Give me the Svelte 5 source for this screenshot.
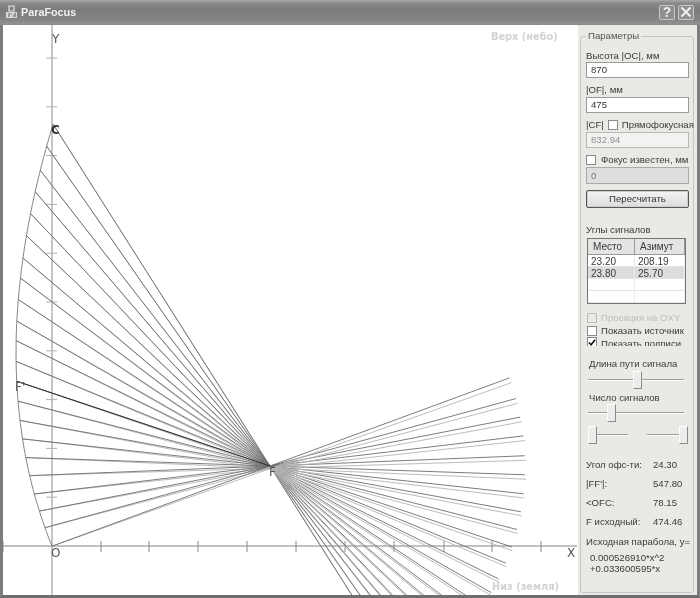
<script>
  // dish geometry, in window pixels
  const focus = { x: 270, y: 466 };
  const focus2 = { x: 271.2, y: 468.2 };
  const startDeg = 159.8;
  const sweepDeg = 77.8;
  const endRadius = 255;

  // heights on the dish where the source rays start
  const rayRows = [
    123, 147, 170, 192, 214, 236, 258, 278, 299, 321, 341,
    361, 381, 401, 420, 439, 458, 476, 494, 511, 528, 546
  ];

  const rad = (d) => (d * Math.PI) / 180;

  function dishPoint(deg) {
    const r = 464 / (1 + Math.cos(rad(deg - 156)));
    return { x: focus.x + r * Math.cos(rad(deg)), y: focus.y + r * Math.sin(rad(deg)) };
  }

  const dishSamples = Array.from({ length: 401 }, (_, i) =>
    dishPoint(startDeg + (sweepDeg * i) / 400)
  );

  function pointAtRow(y) {
    return dishSamples.reduce((best, p) => (Math.abs(p.y - y) < Math.abs(best.y - y) ? p : best));
  }

  function through(p, via) {
    const a = Math.atan2(via.y - p.y, via.x - p.x);
    return { x: via.x + endRadius * Math.cos(a), y: via.y + endRadius * Math.sin(a) };
  }

  const rays = rayRows.map((y) => {
    const p = pointAtRow(y);
    return { p, dark: through(p, focus), light: through(p, focus2) };
  });

  const fPrime = pointAtRow(381);

  const dishPath = dishSamples
    .filter((_, i) => i % 5 === 0)
    .map((p, i) => `${i ? 'L' : 'M'}${p.x.toFixed(1)} ${p.y.toFixed(1)}`)
    .join(' ');

  const yTicks = Array.from({ length: 10 }, (_, i) => 546 - 48.8 * (i + 1));
  const xTicks = [3, 101, 149, 198, 247, 296, 345, 394, 444, 492, 541];

  const angles = [
    ['23.20', '208.19'],
    ['23.80', '25.70'],
    ['', ''],
    ['', '']
  ];

  const stats = [
    ['Угол офс-ти:', '24.30', 'gap-a'],
    ["|FF'|:", '547.80', 'gap-a'],
    ['<OFC:', '78.15', 'gap-a'],
    ['F исходный:', '474.46', 'gap-b']
  ];
</script>

<div class="window">
  <header class="titlebar">
    <svg class="app-icon" width="13" height="14" viewBox="0 0 13 14" aria-hidden="true">
      <path d="M4 1h5v5H4z" fill="none" stroke="#e4e4e4" stroke-width="1.2" />
      <rect x="1" y="7" width="11" height="6" fill="#d8d8d8" />
      <path d="M3 9h2M6 9h1M9 9h2M3 11h2M8 11h3" stroke="#555" stroke-width="1" />
    </svg>
    <span class="title">ParaFocus</span>
    <div class="caption-btn help">?</div>
    <div class="caption-btn close">
      <svg width="12" height="12" viewBox="0 0 12 12" aria-hidden="true">
        <path d="M1.5 1.5l9 9M10.5 1.5l-9 9" stroke="#f2f2f2" stroke-width="2" />
      </svg>
    </div>
  </header>

  <div class="client">
    <div class="canvas">
      <svg width="575" height="570" viewBox="3 25 575 570">
        <line x1="52" y1="25" x2="52" y2="595" class="axis" />
        <line x1="3" y1="546" x2="577" y2="546" class="axis" />
        {#each yTicks as y}
          <line x1="46" x2="57" y1={y} y2={y} class="tick-y" />
        {/each}
        {#each xTicks as x}
          <line x1={x} x2={x} y1="541" y2="552" class="tick-x" />
        {/each}

        {#each rays as r}
          <line x1={r.p.x} y1={r.p.y} x2={r.light.x} y2={r.light.y} class="ray-light" />
          <line x1={r.p.x} y1={r.p.y} x2={r.dark.x} y2={r.dark.y} class="ray-dark" />
        {/each}
        <line x1={fPrime.x} y1={fPrime.y} x2={focus.x} y2={focus.y} class="ray-main" />
        <path d={dishPath} class="dish" />

        <text x="52" y="43" class="label">Y</text>
        <text x="51" y="134" class="label strong">C</text>
        <text x="15" y="391" class="label">F'</text>
        <text x="269" y="476" class="label">F</text>
        <text x="51" y="557" class="label">O</text>
        <text x="567" y="557" class="label">X</text>
        <text x="491" y="40" class="note">Верх (небо)</text>
        <text x="492" y="590" class="note">Низ (земля)</text>
      </svg>
    </div>

    <aside class="panel">
      <fieldset class="group">
        <legend>Параметры</legend>

        <div class="caption first">Высота |OC|, мм</div>
        <div class="field">870</div>
        <div class="caption">|OF|, мм</div>
        <div class="field">475</div>
        <div class="caption check-row">
          <span>|CF|</span><span class="box"></span><span>Прямофокусная</span>
        </div>
        <div class="field readonly">832.94</div>
        <div class="caption check-row known">
          <span class="box"></span><span>Фокус известен, мм</span>
        </div>
        <div class="field disabled">0</div>
        <div class="button">Пересчитать</div>

        <div class="section">Углы сигналов</div>
        <div class="table">
          <div class="thead">
            <span>Место</span><span>Азимут</span>
          </div>
          {#each angles as row, i}
            <div class="tr" class:selected={i === 1}>
              <span>{row[0]}</span><span>{row[1]}</span>
            </div>
          {/each}
        </div>

        <div class="opt off"><span class="box"></span><span>Проекция на OXY</span></div>
        <div class="opt"><span class="box"></span><span>Показать источник</span></div>
        <div class="opt clipped">
          <span class="box checked">
            <svg width="9" height="9" viewBox="0 0 9 9" aria-hidden="true">
              <path d="M1 4.5l2.5 2.5L8 1.5" fill="none" stroke="#111" stroke-width="1.8" />
            </svg>
          </span>
          <span>Показать подписи</span>
        </div>

        <div class="slider-label">Длина пути сигнала</div>
        <div class="slider long"><span class="thumb" style="margin-left: 45px"></span></div>
        <div class="slider-label second">Число сигналов</div>
        <div class="slider long tight"><span class="thumb" style="margin-left: 19px"></span></div>
        <div class="slider-pair">
          <div class="slider short"><span class="thumb" style="margin-left: 0"></span></div>
          <div class="slider short"><span class="thumb" style="margin-left: 32px"></span></div>
        </div>

        <div class="stats">
          {#each stats as s}
            <div class="stat {s[2]}"><span>{s[0]}</span><span>{s[1]}</span></div>
          {/each}
        </div>
        <div class="formula-title">Исходная парабола, у=</div>
        <div class="formula">0.000526910*x^2<br />+0.033600595*x</div>
      </fieldset>
    </aside>
  </div>
</div>

<style>
  :global(body) {
    margin: 0;
    background: #fff;
  }

  .window {
    width: 700px;
    height: 598px;
    display: flex;
    flex-direction: column;
    box-sizing: border-box;
    background: #e9e9e6;
    font-family: 'Liberation Sans', Arial, sans-serif;
    font-size: 9.6px;
    color: #3a3a3a;
    filter: blur(0.4px);
    overflow: hidden;
  }

  .titlebar {
    height: 25px;
    flex: none;
    display: flex;
    align-items: center;
    box-sizing: border-box;
    padding: 0 6px 0 5px;
    background: linear-gradient(#a9a9a9 0, #8b8b8b 3px, #7b7b7b 10px, #858585 20px, #949494 25px);
    border-bottom: 1px solid #8c8c8c;
  }

  .app-icon {
    margin-right: 3px;
  }

  .title {
    flex: 1;
    color: #f0f0f0;
    font-size: 10.8px;
    font-weight: bold;
  }

  .caption-btn {
    width: 16px;
    height: 15px;
    box-sizing: border-box;
    margin-left: 3px;
    display: flex;
    align-items: center;
    justify-content: center;
    border: 1px solid #c8c8c8;
    border-radius: 2px;
    background: #8f8f8f;
    color: #ececec;
    font-size: 14px;
    font-weight: bold;
  }

  .client {
    flex: 1;
    min-height: 0;
    display: flex;
    border-left: 3px solid #7c7c7c;
    border-right: 3px solid #7c7c7c;
    border-bottom: 3px solid #6e6e6e;
  }

  .canvas {
    width: 575px;
    flex: none;
    background: #fff;
    overflow: hidden;
  }

  .canvas svg {
    display: block;
  }

  .axis {
    stroke: #adadad;
    stroke-width: 1.4;
  }

  .tick-y {
    stroke: #b0b0b0;
  }

  .tick-x {
    stroke: #8a8a8a;
  }

  .ray-light {
    stroke: #b4b4b4;
    stroke-width: 0.9;
  }

  .ray-dark {
    stroke: #6e6e6e;
    stroke-width: 0.9;
  }

  .ray-main {
    stroke: #333;
    stroke-width: 1;
  }

  .dish {
    fill: none;
    stroke: #777;
    stroke-width: 0.9;
  }

  .label {
    font-family: 'DejaVu Sans', sans-serif;
    font-size: 12px;
    fill: #555;
  }

  .label.strong {
    fill: #333;
    font-weight: bold;
  }

  .note {
    font-family: 'DejaVu Sans', sans-serif;
    font-size: 9.8px;
    font-weight: bold;
    fill: #d2d2d2;
  }

  .panel {
    flex: 1;
    min-width: 0;
    padding: 5px 3px 2px 2px;
    box-sizing: border-box;
    display: flex;
  }

  .group {
    flex: 1;
    min-width: 0;
    margin: 0;
    padding: 0 4px 0 5px;
    border: 1px solid #c6c6c6;
    border-radius: 3px;
    box-sizing: border-box;
  }

  legend {
    padding: 0 2px;
    margin-left: 0;
    line-height: 12px;
    color: #555;
  }

  .caption {
    height: 13px;
    line-height: 13px;
    margin-top: 5px;
    white-space: nowrap;
  }

  .caption.first {
    height: 12px;
    margin-top: 7px;
  }

  .check-row {
    display: flex;
    align-items: center;
    gap: 4px;
  }

  .known {
    gap: 5px;
  }

  .box {
    width: 10px;
    height: 10px;
    flex: none;
    box-sizing: border-box;
    border: 1px solid #8a8a8a;
    background: #fff;
    display: inline-flex;
    align-items: center;
    justify-content: center;
  }

  .field {
    height: 16px;
    box-sizing: border-box;
    margin-top: 1px;
    width: 103px;
    padding-left: 4px;
    line-height: 14px;
    border: 1px solid #9a9a9a;
    background: #fff;
    color: #333;
  }

  .readonly {
    color: #8f8f8f;
    border-color: #b8b8b8;
    background: #f2f2f0;
  }

  .disabled {
    height: 17px;
    line-height: 15px;
    color: #777;
    background: #dedede;
    border-color: #aaa;
  }

  .button {
    height: 18px;
    width: 103px;
    margin-top: 6px;
    box-sizing: border-box;
    border: 1px solid #555;
    border-radius: 2px;
    background: linear-gradient(#f4f4f4, #dcdcdc);
    box-shadow: inset 0 0 0 1px #cfcfcf;
    text-align: center;
    line-height: 15px;
    color: #333;
  }

  .section {
    margin-top: 15px;
    height: 13px;
    line-height: 13px;
  }

  .table {
    margin-top: 2px;
    margin-left: 1px;
    width: 99px;
    height: 66px;
    box-sizing: border-box;
    border: 1px solid #777;
    background: #fff;
    overflow: hidden;
  }

  .thead {
    height: 16px;
    display: grid;
    grid-template-columns: 47px 1fr;
    background: #e4e4e2;
    border-bottom: 1px solid #999;
    box-sizing: border-box;
    line-height: 15px;
    font-size: 10px;
  }

  .thead span {
    padding-left: 5px;
    border-right: 1px solid #999;
  }

  .tr {
    height: 12px;
    display: grid;
    grid-template-columns: 47px 1fr;
    box-sizing: border-box;
    border-bottom: 1px solid #e4e4e4;
    line-height: 13px;
    font-size: 10px;
  }

  .tr span {
    padding-left: 3px;
    border-right: 1px solid #ececec;
  }

  .selected {
    background: #dcdcdc;
  }

  .opt {
    height: 13px;
    line-height: 13px;
    display: flex;
    align-items: center;
    gap: 4px;
    margin-left: 1px;
    white-space: nowrap;
  }

  .off {
    margin-top: 7px;
    color: #bdbdbd;
  }

  .off .box {
    background: #e9e9e6;
    border-color: #bdbdbd;
  }

  .clipped {
    height: 9px;
    overflow: hidden;
    align-items: flex-start;
  }

  .slider-label {
    margin-top: 11px;
    margin-left: 3px;
    height: 13px;
    line-height: 13px;
  }

  .slider-label.second {
    margin-top: 2px;
  }

  .slider {
    height: 18px;
    margin-top: 1px;
    display: flex;
    background: linear-gradient(#e9e9e6 8px, #9c9c9c 8px, #9c9c9c 9px, #fff 9px, #fff 10px, #e9e9e6 10px);
  }

  .long {
    margin-left: 2px;
    width: 96px;
  }

  .tight {
    margin-top: 0;
  }

  .short {
    width: 40px;
    margin-top: 0;
  }

  .slider-pair {
    margin-top: 4px;
    margin-left: 2px;
    width: 99px;
    display: flex;
    justify-content: space-between;
  }

  .thumb {
    width: 9px;
    height: 18px;
    box-sizing: border-box;
    flex: none;
    background: #ececea;
    border: 1px solid #fff;
    border-right-color: #8a8a8a;
    border-bottom-color: #8a8a8a;
  }

  .stats {
    margin-top: 14px;
  }

  .stat {
    display: grid;
    grid-template-columns: 67px 1fr;
    height: 13px;
    line-height: 13px;
    white-space: nowrap;
  }

  .gap-a {
    margin-bottom: 6px;
  }

  .gap-b {
    margin-top: 3px;
    margin-bottom: 6px;
  }

  .formula-title {
    margin-top: 7px;
    height: 13px;
    line-height: 13px;
    white-space: nowrap;
  }

  .formula {
    margin-top: 5px;
    margin-left: 4px;
    line-height: 10.5px;
  }
</style>
